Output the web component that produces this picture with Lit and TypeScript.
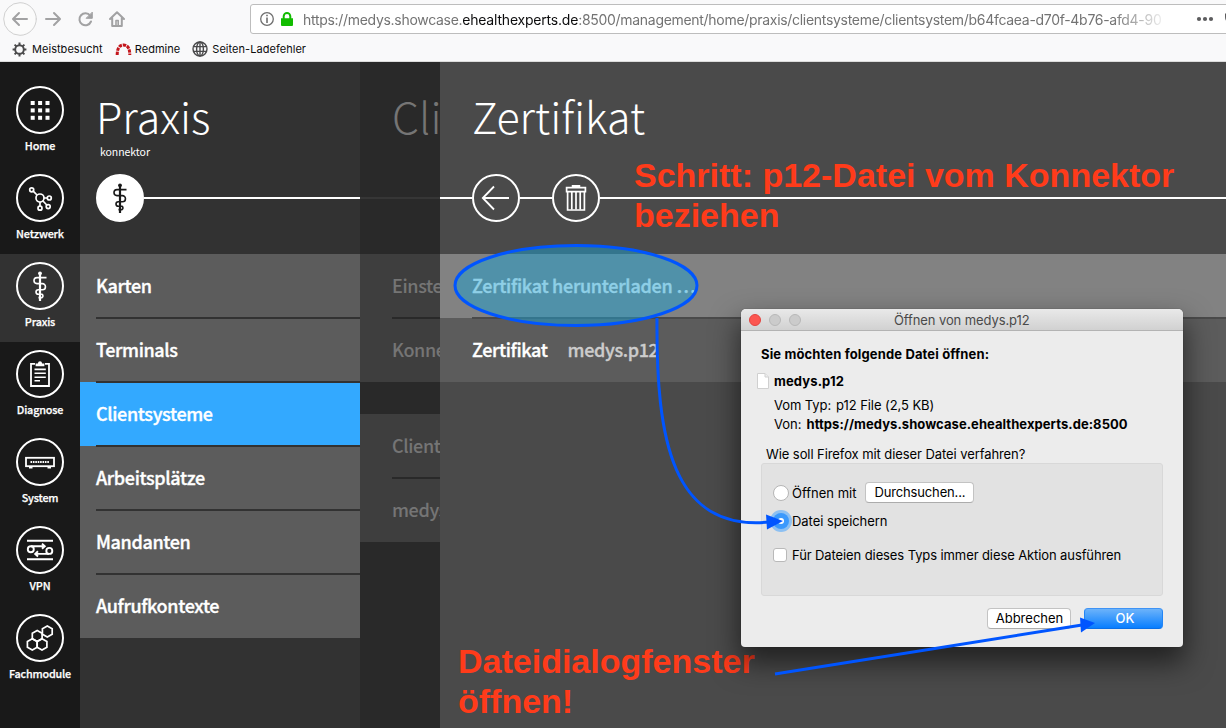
import { LitElement, html, svg, css } from "lit";
import { customElement } from "lit/decorators.js";

const staff = svg`<g fill="none" stroke="currentColor" stroke-width="1.6">
  <path d="M24 12V39" stroke-width="2.2"/><circle cx="24" cy="11.3" r="1.9" fill="currentColor" stroke="none"/>
  <path d="M30.5 15.6H21a3 3 0 0 0 0 6H26.4a2.9 2.9 0 0 1 0 6.1H22.3a2.3 2.3 0 0 0 0 4.6H26a1.9 1.9 0 0 1 0 3.3H22.5"/>
</g>`;
const hex = (x: number, y: number) =>
  svg`<path d="M${x} ${y - 5.6}L${x + 4.9} ${y - 2.8}V${y + 2.8}L${x} ${y + 5.6}L${x - 4.9} ${y + 2.8}V${y - 2.8}Z"/>`;

const icons: Record<string, unknown> = {
  home: svg`<g fill="currentColor">${[0, 1, 2].map((r) => [0, 1, 2].map((c) =>
    svg`<rect x=${14.7 + c * 7.4} y=${15 + r * 7.4} width="4" height="4"/>`))}</g>`,
  net: svg`<g fill="none" stroke="currentColor" stroke-width="1.7"><circle cx="24" cy="24" r="4"/>
    <circle cx="15.7" cy="15.8" r="2"/><circle cx="33.3" cy="24" r="2"/><circle cx="32.2" cy="32.6" r="2"/><circle cx="24" cy="34.2" r="2"/>
    <path d="M17.2 17.2L21 21M28 24H31.3M27 27L30.8 31M24 28V32.2"/></g>`,
  staff,
  clip: svg`<g fill="none" stroke="currentColor" stroke-width="1.8"><path d="M19 13.9H15V36H33V13.9H29"/>
    <path d="M18.5 19.4H29.8M18.5 23.2H29.8M18.5 27.2H29.8M18.5 30.8H24" stroke-width="1.6"/>
    <path d="M19.6 16.2V13.6H21.8Q22.2 11.2 24 11.2T26.2 13.6H28.4V16.2Z" fill="currentColor" stroke="none"/></g>`,
  sys: svg`<g fill="none" stroke="currentColor"><rect x="10" y="19.8" width="28" height="8.4" stroke-width="1.8"/>
    <path d="M14.5 24H33" stroke-width="2" stroke-dasharray="1.6 0.8"/><path d="M13 29.8H16.5M31.5 29.8H35" stroke-width="1.4"/></g>`,
  vpn: svg`<g fill="none" stroke="currentColor" stroke-width="1.9"><path d="M11 14.8H37M11 33.2H37"/>
    <circle cx="14.8" cy="23.2" r="3"/><circle cx="33.3" cy="24.9" r="3"/><path d="M15 20.2H28M33 27.9H20M26 17.6L28.8 20.2L26 22.8M22 25.3L19.2 27.9L22 30.5"/></g>`,
  hex: svg`<g fill="none" stroke="currentColor" stroke-width="1.7">${hex(31.3, 17.5)}${hex(21.2, 22)}${hex(16.3, 30.4)}${hex(26, 30.4)}</g>`,
  back: svg`<path d="M37 24H11M22 12.5L10.8 24L22 35.5" fill="none" stroke="currentColor" stroke-width="1.8"/>`,
  trash: svg`<g fill="none" stroke="currentColor" stroke-width="1.7"><path d="M14.6 13.6H33.4V17.6H14.6ZM20.6 13.4V11.9H27.4V13.4M15.6 17.6V36H32.4V17.6"/>
    <path d="M19.8 18V35.5M24 18V35.5M28.2 18V35.5"/></g>`,
};

const icon = (name: string) => html`<svg viewBox="0 0 48 48" width="48" height="48">${icons[name]}</svg>`;

@customElement("app-root")
export class AppRoot extends LitElement {
  static styles = css`
    :host { display: flex; flex-direction: column; position: relative; width: 1226px; height: 728px; overflow: hidden;
      font-family: "Noto Sans CJK SC", "Noto Sans", sans-serif; color: #fff; background: #4a4a4a; }
    * { box-sizing: border-box; }
    svg { display: block; flex: none; }
    .ui { font-family: Inter, "Open Sans", sans-serif; }

    .chrome { height: 62px; flex: none; background: #f9f9fa; border-bottom: 1px solid #dcdcdc; color: #0c0c0d; }
    .nav { display: flex; height: 39px; padding-left: 3px; }
    .url { display: flex; align-items: center; margin-left: 117px; margin-top: 4px; width: 1000px; flex: none; height: 30px;
      border: 1px solid #bdbdbd; border-radius: 3px; background: #fff; padding-left: 9px; }
    .address { width: 858px; flex: none; margin-left: 9px; overflow: hidden; white-space: nowrap; font-size: 14px; color: #737373; letter-spacing: -0.3px;
      -webkit-mask-image: linear-gradient(90deg, #000 810px, transparent 866px); mask-image: linear-gradient(90deg, #000 810px, transparent 866px); }
    .address b { font-weight: 400; color: #0c0c0d; letter-spacing: -0.2px; }
    .dots { margin-left: 32px; }
    .marks { display: flex; align-items: center; height: 20px; padding-left: 12px; font-size: 11px; letter-spacing: 0.04px; }
    .marks span { display: flex; align-items: center; gap: 5px; }
    .marks .m2 { margin-left: 12px; gap: 3px; }
    .marks .m3 { margin-left: 12px; gap: 4px; }

    .app { display: flex; flex: 1; min-height: 0; }
    .side { width: 80px; flex: none; background: #191919; padding-top: 16px; }
    .item { height: 88px; padding-top: 8px; display: flex; flex-direction: column; align-items: center; font-size: 10.8px; font-weight: 500; line-height: 16px;
      letter-spacing: -0.17px; -webkit-text-stroke: 0.25px; }
    .item.on { background: #323232; }
    .item span { margin-top: 3px; white-space: nowrap; }
    .ring { width: 48px; height: 48px; flex: none; border: 2px solid #fff; border-radius: 50%; display: flex; align-items: center; justify-content: center; }
    .ring svg { margin: -2px; }
    .ring.full { background: #fff; color: #191919; }

    .panel { flex: none; overflow: hidden; background: #323232; }
    .p1 { width: 280px; } .p2 { width: 80px; background: #292929; color: #757575; } .p3 { flex: 1; background: #4a4a4a; }
    .head { height: 192px; padding-top: 23px; }
    h1 { margin: 0 0 0 16px; font-weight: 300; font-size: 43px; line-height: 60px; height: 60px; white-space: nowrap; }
    .p2 h1, .p3 h1 { margin-left: 32px; }
    .sub { height: 29px; margin-left: 20px; font-size: 10.5px; line-height: 14px; letter-spacing: -0.05px; }
    .bar { display: flex; align-items: center; height: 48px; }
    .bar i { height: 2px; background: #fff; }
    .w16 { width: 16px; } .w32 { width: 32px; } .grow { flex: 1; }
    .p2 .bar i { background: #363636; }
    .row { height: 64px; display: flex; padding-left: 16px; background: #5c5c5c; font-size: 18px; font-weight: 500; line-height: 62px; white-space: nowrap;
      letter-spacing: -0.36px; -webkit-text-stroke: 0.35px; }
    .row div { flex: 1; height: 65px; border-bottom: 2px solid #323232; position: relative; }
    .row:last-child div, .row.end div { border-bottom-color: transparent; }
    .row.on { background: #33a9ff; }
    .p2 .row { padding-left: 32px; background: #3e3e3e; -webkit-text-stroke: 0.1px; }
    .p2 .row div { border-bottom-color: #292929; }
    .p2 .row.end div, .p2 .row:last-child div { border-bottom-color: transparent; }
    .gap { height: 32px; }
    .p3 .row { padding-left: 32px; }
    .p3 .row.hi { background: #828282; letter-spacing: -0.28px; }
    .p3 .row.hi div { border-bottom-color: #4a4a4a; }
    .val { color: #ccc; margin-left: 20px; }

    .note { position: absolute; font: bold 34px/40px "Liberation Sans", Arial, sans-serif; color: #ff3b1a; white-space: nowrap; }
    .n1 { left: 634px; top: 155px; } .n2 { left: 458px; top: 641px; }
    .draw { position: absolute; left: 0; top: 0; pointer-events: none; }

    .dlg { position: absolute; left: 741px; top: 309px; width: 442px; height: 338px; border-radius: 5px 5px 4px 4px; overflow: hidden; background: #ececec; color: #000;
      font-size: 13px; line-height: 16px; display: flex; flex-direction: column; }
    .shade { position: absolute; left: 741px; top: 309px; width: 442px; height: 338px; border-radius: 5px; box-shadow: 0 14px 28px 2px rgba(0,0,0,.55), 0 0 1px rgba(0,0,0,.5); }
    .tb { height: 22px; flex: none; display: flex; align-items: center; padding-left: 8px; background: linear-gradient(#e9e9e9, #d1d1d1); border-bottom: 1px solid #b3b3b3; color: #4a4a4a; }
    .tb u { width: 12px; height: 12px; border-radius: 50%; background: #cbcbcb; border: 1px solid #b8b8b8; margin-right: 8px; }
    .tb u.red { background: #fc5650; border-color: #e2443f; }
    .tb span { margin-left: 85px; white-space: nowrap; letter-spacing: -0.1px; }
    .line { display: flex; align-items: center; white-space: nowrap; height: 16px; flex: none; }
    .l1 { margin: 15px 0 0 20px; font-weight: 700; letter-spacing: 0.14px; }
    .l2 { margin: 11px 0 0 16px; font-weight: 700; gap: 5px; letter-spacing: 0.12px; }
    .l3 { margin: 8px 0 0 33px; gap: 5px; letter-spacing: -0.08px; }
    .l4 { margin: 3px 0 0 33px; gap: 5px; }
    .l4 b { letter-spacing: 0.06px; }
    .l5 { margin: 14px 0 0 25px; letter-spacing: -0.08px; }
    .box { margin: 1px 20px 0; height: 133px; border: 1px solid #d8d8d8; border-radius: 3px; background: #e2e2e2; flex: none; padding: 18px 0 0 11px; }
    .btn { display: flex; align-items: center; justify-content: center; height: 21px; border: 1px solid #c3c3c3; border-bottom-color: #acacac; border-radius: 4px; background: #fff; padding-bottom: 1px; }
    .radio { width: 16px; height: 16px; border-radius: 50%; background: #fff; border: 1px solid #b5b5b5; margin-right: 3px; }
    .radio.on { background: #3b99fc; border: 0; box-shadow: 0 0 0 3px #8dc0f2; display: flex; align-items: center; justify-content: center; }
    .radio.on::after { content: ""; width: 6px; height: 6px; border-radius: 50%; background: #fff; }
    .check { width: 14px; height: 14px; margin: 0 5px 0 0; border: 1px solid #b9b9b9; border-radius: 3px; background: #fff; }
    .b1 { height: 21px; } .b1 .btn { width: 109px; margin-left: 9px; letter-spacing: -0.15px; }
    .b2 { margin-top: 10px; letter-spacing: -0.05px; } .b3 { margin-top: 18px; letter-spacing: -0.1px; }
    .foot { display: flex; margin: 12px 20px 0 0; justify-content: flex-end; gap: 13px; }
    .foot .btn { width: 84px; padding-left: 1px; }
    .foot .ok { width: 79px; padding-left: 3px; color: #fff; border-color: #3f93f5 #2385f5 #0b6fe6; background: linear-gradient(#6cb3fa, #087eff); font-weight: 500; }
  `;

  private chrome() {
    return html`<div class="chrome ui">
      <div class="nav">
        <svg width="130" height="39" fill="none" stroke="#a2a2a3" stroke-width="2" stroke-linecap="round" stroke-linejoin="round">
          <circle cx="17" cy="19" r="16.3" fill="#fbfbfb" stroke="#d0d0d0" stroke-width="1"/>
          <path d="M24 19H10.5M16 13L10 19L16 25M43 19H56.5M51 13L57 19L51 25"/>
          <path d="M87.2 15.6A6 6 0 1 0 88 21.5"/><path d="M89.3 12.5V18.3H83.5Z" fill="#a2a2a3" stroke-width="1"/>
          <path d="M107 19L114 12.2L121 19M109.2 18V26H118.8V18"/><path d="M113 25.5V20.5H115.2V25.5" stroke-width="1.6"/>
        </svg>
        <div class="url">
          <svg width="34" height="20"><circle cx="7" cy="10" r="6.3" fill="none" stroke="#6f6f6f" stroke-width="1.3"/>
            <path d="M6.2 5.7H7.8V7.3H6.2ZM6.2 8.6H7.8V14H6.2Z" fill="#6f6f6f"/>
            <path d="M21 9.2H33V16Q33 17 32 17H22Q21 17 21 16Z" fill="#12bc00"/><path d="M23.7 10V7.2A3.3 3.3 0 0 1 30.3 7.2V10" fill="none" stroke="#12bc00" stroke-width="2"/></svg>
          <span class="address">https://medys.showcase.<b>ehealthexperts.de</b>:8500/management/home/praxis/clientsysteme/clientsystem/b64fcaea-d70f-4b76-afd4-90</span>
          <svg class="dots" width="50" height="20" fill="#5c5c5e"><circle cx="6" cy="10" r="2.1"/><circle cx="12" cy="10" r="2.1"/><circle cx="18" cy="10" r="2.1"/><path d="M32 4.5V8Q32 11 34 13V4.5Z"/></svg>
        </div>
      </div>
      <div class="marks">
        <span><svg width="15" height="15" fill="none" stroke="#4a4a4b"><circle cx="7.5" cy="7.5" r="4.3" stroke-width="1.9"/>
          <path d="M7.5 0.6V3M7.5 12V14.4M0.6 7.5H3M12 7.5H14.4M2.6 2.6L4.4 4.4M10.6 10.6L12.4 12.4M12.4 2.6L10.6 4.4M4.4 10.6L2.6 12.4" stroke-width="2"/></svg>Meistbesucht</span>
        <span class="m2"><svg width="17" height="15" fill="none" stroke="#c4161c"><path d="M2.2 13Q2.2 3 8.5 3T14.8 13" stroke-width="3" stroke-dasharray="3.3 0.9"/></svg>Redmine</span>
        <span class="m3"><svg width="16" height="16" fill="none" stroke="#4a4a4b" stroke-width="1.4"><circle cx="8" cy="8" r="7"/><ellipse cx="8" cy="8" rx="3.4" ry="7"/><path d="M8 1V15M1.5 5.6H14.5M1.5 10.4H14.5"/></svg>Seiten-Ladefehler</span>
      </div>
    </div>`;
  }

  private side() {
    const items = [["home", "Home"], ["net", "Netzwerk"], ["staff", "Praxis"], ["clip", "Diagnose"], ["sys", "System"], ["vpn", "VPN"], ["hex", "Fachmodule"]];
    return html`<nav class="side">${items.map(([i, t]) =>
      html`<div class="item ${i === "staff" ? "on" : ""}"><div class="ring">${icon(i)}</div><span>${t}</span></div>`)}</nav>`;
  }

  private dialog() {
    return html`<div class="shade"></div><div class="dlg ui">
      <div class="tb"><u class="red"></u><u></u><u></u><span>Öffnen von medys.p12</span></div>
      <div class="line l1">Sie möchten folgende Datei öffnen:</div>
      <div class="line l2"><svg width="12" height="16"><path d="M0.5 0.5H8L11.5 4V15.5H0.5Z" fill="#fff" stroke="#d0d0d0"/><path d="M8 0.5V4H11.5" fill="#eee" stroke="#d0d0d0"/></svg>medys.p12</div>
      <div class="line l3"><span>Vom Typ:</span><span>p12 File (2,5 KB)</span></div>
      <div class="line l4"><span>Von:</span><b>https://medys.showcase.ehealthexperts.de:8500</b></div>
      <div class="line l5">Wie soll Firefox mit dieser Datei verfahren?</div>
      <div class="box">
        <div class="line b1"><i class="radio"></i><span>Öffnen mit</span><div class="btn">Durchsuchen...</div></div>
        <div class="line b2"><i class="radio on"></i><span>Datei speichern</span></div>
        <div class="line b3"><i class="check"></i><span>Für Dateien dieses Typs immer diese Aktion ausführen</span></div>
      </div>
      <div class="foot"><div class="btn">Abbrechen</div><div class="btn ok">OK</div></div>
    </div>`;
  }

  render() {
    return html`${this.chrome()}
      <div class="app">
        ${this.side()}
        <section class="panel p1">
          <div class="head"><h1>Praxis</h1><div class="sub">konnektor</div>
            <div class="bar"><span class="w16"></span><div class="ring full">${icon("staff")}</div><i class="grow"></i></div></div>
          ${["Karten", "Terminals", "Clientsysteme", "Arbeitsplätze", "Mandanten", "Aufrufkontexte"].map((t) =>
            html`<div class="row ${t === "Clientsysteme" ? "on" : ""}"><div>${t}</div></div>`)}
        </section>
        <section class="panel p2">
          <div class="head"><h1>Clientsystem</h1><div class="sub"></div><div class="bar"><i class="grow"></i></div></div>
          <div class="row"><div>Einstellungen</div></div><div class="row end"><div>Konnektor</div></div>
          <div class="gap"></div>
          <div class="row"><div>Clientsystem</div></div><div class="row"><div>medys</div></div>
        </section>
        <section class="panel p3">
          <div class="head"><h1>Zertifikat</h1><div class="sub"></div>
            <div class="bar"><i class="w32"></i><div class="ring">${icon("back")}</div><i class="w32"></i><div class="ring">${icon("trash")}</div><i class="grow"></i></div></div>
          <div class="row hi"><div>Zertifikat herunterladen …</div></div>
          <div class="row end"><div>Zertifikat<span class="val">medys.p12</span></div></div>
        </section>
      </div>
      <div class="note n1">Schritt: p12-Datei vom Konnektor<br>beziehen</div>
      <div class="note n2">Dateidialogfenster<br>öffnen!</div>
      ${this.dialog()}
      <svg class="draw" width="1226" height="728" fill="none" stroke="#0055ff" stroke-width="3">
        <ellipse cx="576" cy="285.5" rx="121" ry="40" fill="#1e9fcf" fill-opacity=".5"/>
        <path d="M657 318C656 440 672 532 770 522"/><path d="M766 514.5L783 521L767 529.5Z" fill="#0055ff" stroke="none"/>
        <path d="M775 674L1082 625"/><path d="M1080 617.5L1095 623L1081 632.5Z" fill="#0055ff" stroke="none"/>
      </svg>`;
  }
}
